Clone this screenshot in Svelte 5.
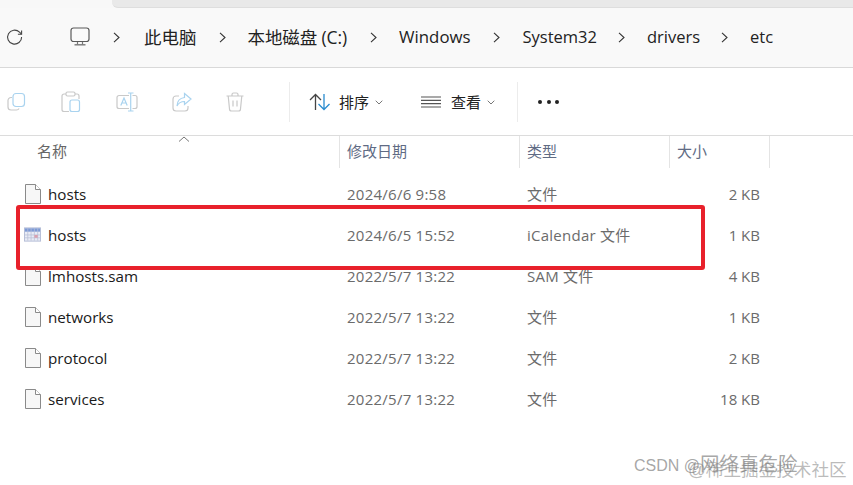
<script>
  const crumbs = [
    { label: '此电脑', cls: 'c1' },
    { label: '本地磁盘 (C:)', cls: 'c2' },
    { label: 'Windows', cls: 'c3' },
    { label: 'System32', cls: 'c4' },
    { label: 'drivers', cls: 'c5' },
    { label: 'etc', cls: 'c6' }
  ];
  const files = [
    { name: 'hosts', date: '2024/6/6 9:58', type: '文件', size: '2 KB' },
    { name: 'hosts', date: '2024/6/5 15:52', type: 'iCalendar 文件', size: '1 KB', cal: true },
    { name: 'lmhosts.sam', date: '2022/5/7 13:22', type: 'SAM 文件', size: '4 KB' },
    { name: 'networks', date: '2022/5/7 13:22', type: '文件', size: '1 KB' },
    { name: 'protocol', date: '2022/5/7 13:22', type: '文件', size: '2 KB' },
    { name: 'services', date: '2022/5/7 13:22', type: '文件', size: '18 KB' }
  ];
</script>

<div class="page">
  <div class="tabstrip"><div class="tab"></div></div>
  <div class="address">
    <svg class="refresh" width="18" height="18" viewBox="0 0 18 18" fill="none" stroke="#444" stroke-width="1.1">
      <path d="M15.6 8.9a7 7 0 1 1-2.1-4.8l2 2"/><path d="M15.6 2.6v3.7h-3.7"/>
    </svg>
    <svg class="pc" width="20" height="20" viewBox="0 0 20 20" fill="none">
      <rect x="1" y="1" width="18" height="13.5" rx="2.5" stroke="#5a5a5a" stroke-width="1.2" fill="#fafafa"/>
      <path d="M7.5 15v2.4M12.5 15v2.4" stroke="#777" stroke-width="1.2"/>
      <path d="M4.5 17.8h11" stroke="#777" stroke-width="1.4"/>
    </svg>
    {#each crumbs as c}
      <svg class="chev" width="7" height="11" viewBox="0 0 7 11" fill="none" stroke="#333" stroke-width="1.1"><path d="M1 .8 6 5.5 1 10.2"/></svg>
      <span class="crumb {c.cls}">{c.label}</span>
    {/each}
  </div>

  <div class="toolbar">
    <div class="tools">
      <svg width="20" height="20" viewBox="0 0 20 20" fill="none" stroke-width="1.2">
        <path d="M5 5.5H4a3 3 0 0 0-3 3V15a3 3 0 0 0 3 3h5.5a3 3 0 0 0 2.6-1.5" stroke="#c9c9c9"/>
        <rect x="6" y="1.5" width="11.5" height="13" rx="3" stroke="#a9d3ef"/>
      </svg>
      <svg width="20" height="22" viewBox="0 0 20 22" fill="none" stroke-width="1.2">
        <path d="M5 3H3a2 2 0 0 0-2 2v13.5a2 2 0 0 0 2 2h5M14 3h2a2 2 0 0 1 2 2v3" stroke="#c9c9c9"/>
        <rect x="5" y="1" width="9" height="4" rx="1.5" stroke="#c9c9c9"/>
        <rect x="9" y="9" width="9.5" height="11.5" rx="2" stroke="#a9d3ef"/>
      </svg>
      <svg width="22" height="20" viewBox="0 0 22 20" fill="none" stroke-width="1.2">
        <path d="M13 3.5H3a2 2 0 0 0-2 2v9a2 2 0 0 0 2 2h10M16.500 3.500H19a2 2 0 0 1 2 2v9a2 2 0 0 1-2 2h-2.500" stroke="#c9c9c9"/>
        <path d="M12 1h5.500M14.700 1v18M12 19h5.500M4.800 13.500 8 6l3.200 7.500M6 11h4.200" stroke="#a9d3ef"/>
      </svg>
      <svg width="20" height="20" viewBox="0 0 20 20" fill="none" stroke-width="1.2">
        <path d="M7 4H4a3 3 0 0 0-3 3v9a3 3 0 0 0 3 3h9a3 3 0 0 0 3-3v-2" stroke="#c9c9c9"/>
        <path d="M12.500 1.500 19 7l-6.500 5.500V9.500C9 9.500 6.500 11 5 14c.2-5 3-8 7.500-8.500z" stroke="#a9d3ef"/>
      </svg>
      <svg width="18" height="20" viewBox="0 0 18 20" fill="none" stroke="#c9c9c9" stroke-width="1.2">
        <path d="M.5 4h17M6 4V2.500A1.500 1.500 0 0 1 7.500 1h3A1.500 1.500 0 0 1 12 2.500V4M2.200 4l1.300 13a2 2 0 0 0 2 2h7a2 2 0 0 0 2-2L15.800 4M7 8.500v6M11 8.500v6"/>
      </svg>
    </div>
    <div class="sep s1"></div>
    <svg class="sort" width="22" height="18" viewBox="0 0 22 18" fill="none" stroke-width="1.3">
      <path d="M6.500 17V1.500M1 7l5.500-5.500L12 7" stroke="#444"/>
      <path d="M15 1v15.500M9.500 11l5.500 5.500 5.500-5.500" stroke="#2a8ccf"/>
    </svg>
    <span class="cmd">排序</span>
    <svg class="down" width="8" height="5" viewBox="0 0 8 5" fill="none" stroke="#777"><path d="m.7.7 3.300 3.300L7.300.7"/></svg>
    <svg class="lines" width="20" height="12" viewBox="0 0 20 12" stroke="#555" stroke-width="1.200"><path d="M0 1h20M0 4.300h20M0 7.600h20M0 11h20"/></svg>
    <span class="cmd">查看</span>
    <svg class="down" width="8" height="5" viewBox="0 0 8 5" fill="none" stroke="#777"><path d="m.7.7 3.300 3.300L7.300.7"/></svg>
    <div class="sep s2"></div>
    <div class="dots"><i></i><i></i><i></i></div>
  </div>

  <div class="list">
    <svg class="caret" width="12" height="7" viewBox="0 0 12 7" fill="none" stroke="#777"><path d="m1 5.500 5-4.500 5 4.500"/></svg>
    <div class="row head">
      <div class="name-h">名称</div>
      <div class="hc">修改日期</div>
      <div class="hc">类型</div>
      <div class="hc">大小</div>
    </div>
    {#each files as f}
      <div class="row file">
        <div class="name">
          {#if f.cal}
            <svg class="ficon cal" width="18" height="15" viewBox="0 0 18 15">
              <rect x=".5" y=".5" width="17" height="14" fill="#e9ecf6" stroke="#b4bdd6"/>
              <rect x="1" y="1" width="16" height="3.500" fill="#7d9ad6"/>
              <path d="M4 1v13M7.500 1v13M11 1v13M14.500 1v13M1 8h16M1 11h16" stroke="#b9bfd6" stroke-width=".8"/>
              <rect x="11" y="8" width="3.500" height="3" fill="#d8a0b0"/>
            </svg>
          {:else}
            <svg class="ficon" width="16" height="20" viewBox="0 0 16 20">
              <path d="M.5.5h10l5 5v14H.5z" fill="#f7f7f7" stroke="#8a8a8a"/>
              <path d="M10.500.5v5h5" fill="#fff" stroke="#8a8a8a"/>
            </svg>
          {/if}
          <span>{f.name}</span>
        </div>
        <div class="muted">{f.date}</div>
        <div class="muted">{f.type}</div>
        <div class="muted size">{f.size}</div>
      </div>
    {/each}
  </div>

  <div class="highlight"></div>
  <div class="wm wm1">CSDN @<span class="big">网络真危险</span></div>
  <div class="wm wm2">@稀土掘金技术社区</div>
</div>

<style>
  :global(body) { margin: 0; background: #fff; }
  .page {
    position: relative;
    width: 853px;
    height: 485px;
    overflow: hidden;
    background: #fff;
    color: #1c1c1c;
    font-family: "Open Sans", "Noto Sans CJK SC", sans-serif;
  }
  .tabstrip { height: 8px; background: #f8f8f8; padding-left: 112px; }
  .tab { height: 7px; background: #e9e9e9; border-bottom: 1px solid #dedede; border-bottom-left-radius: 6px; }
  .address {
    height: 60px;
    box-sizing: border-box;
    border-bottom: 1px solid #d9d9d9;
    background: #f9f9f9;
    display: flex;
    align-items: center;
    padding-left: 6px;
    padding-bottom: 1px;
    font-size: 16.500px;
  }
  .refresh { margin-right: 46px; }
  .pc { margin-right: 23px; }
  .chev { flex: none; }
  .crumb { white-space: nowrap; color: #222; position: relative; top: -1px; }
  .c1 { margin-left: 24px; margin-right: 22px; font-size: 17.500px; }
  .c2 { margin-left: 22px; margin-right: 23px; font-size: 17.500px; letter-spacing: -.1px; }
  .c3 { margin-left: 22px; margin-right: 23px; font-size: 16.800px; }
  .c4 { margin-left: 22px; margin-right: 21px; }
  .c5 { margin-left: 22px; margin-right: 21px; }
  .c6 { margin-left: 22px; }

  .toolbar {
    height: 68px;
    box-sizing: border-box;
    border-bottom: 1px solid #dcdcdc;
    display: flex;
    align-items: center;
    padding-left: 7px;
    padding-top: 1px;
  }
  .tools { width: 259px; display: flex; align-items: center; justify-content: space-between; padding-right: 22px; box-sizing: border-box; }
  .sep { width: 1px; height: 40px; background: #ececec; }
  .s1 { margin-left: 23px; margin-right: 19px; }
  .s2 { margin-left: 22px; margin-right: 20px; }
  .sort { margin-right: 8px; }
  .cmd { font-size: 15px; color: #222; margin-right: 6px; position: relative; top: -1px; }
  .lines { margin-left: 38px; margin-right: 10px; }
  .dots { display: flex; gap: 4.500px; }
  .dots i { width: 4px; height: 4px; border-radius: 50%; background: #222; }

  .list { position: relative; }
  .caret { position: absolute; left: 178px; top: 0; }
  .row { display: grid; grid-template-columns: 340px 180px 150px 100px; align-items: center; }
  .head { height: 32px; grid-template-columns: 339px 180px 150px 100px; }
  .name-h { padding-left: 37px; font-size: 15px; line-height: 30px; height: 32px; color: #666; }
  .hc { height: 32px; line-height: 30px; border-left: 1px solid #e4e4e4; padding-left: 7px; font-size: 15px; color: #5f6b84; box-sizing: border-box; }
  .head::after { content: ""; position: absolute; left: 769px; top: 0; width: 1px; height: 32px; background: #e4e4e4; }
  .file { height: 41px; font-size: 15.200px; position: relative; top: 5px; }
  .name { display: flex; align-items: center; padding-left: 25px; color: #1a1a1a; }
  .ficon { width: 16px; margin-right: 7px; flex: none; }
  .ficon.cal { width: 17px; margin-left: -1px; }
  .muted { padding-left: 7px; color: #6b6b6b; font-size: 15px; line-height: 20px; letter-spacing: .25px; }
  .size { text-align: right; padding-right: 10px; letter-spacing: 0; }

  .highlight {
    position: absolute;
    left: 16px;
    top: 205px;
    width: 689px;
    height: 65px;
    box-sizing: border-box;
    border: 4.500px solid #e8212b;
    border-radius: 3px;
  }
  .wm {
    position: absolute;
    white-space: nowrap;
    font-size: 16px;
    line-height: 22px;
    color: rgba(110, 110, 110, .62);
    font-family: "Liberation Sans", "Noto Sans CJK SC", sans-serif;
  }
  .big { font-size: 19.500px; }
  .wm1 { left: 634px; top: 453px; }
  .wm2 { left: 688px; top: 459px; font-size: 17.600px; color: rgba(120, 120, 120, .5); }
</style>
